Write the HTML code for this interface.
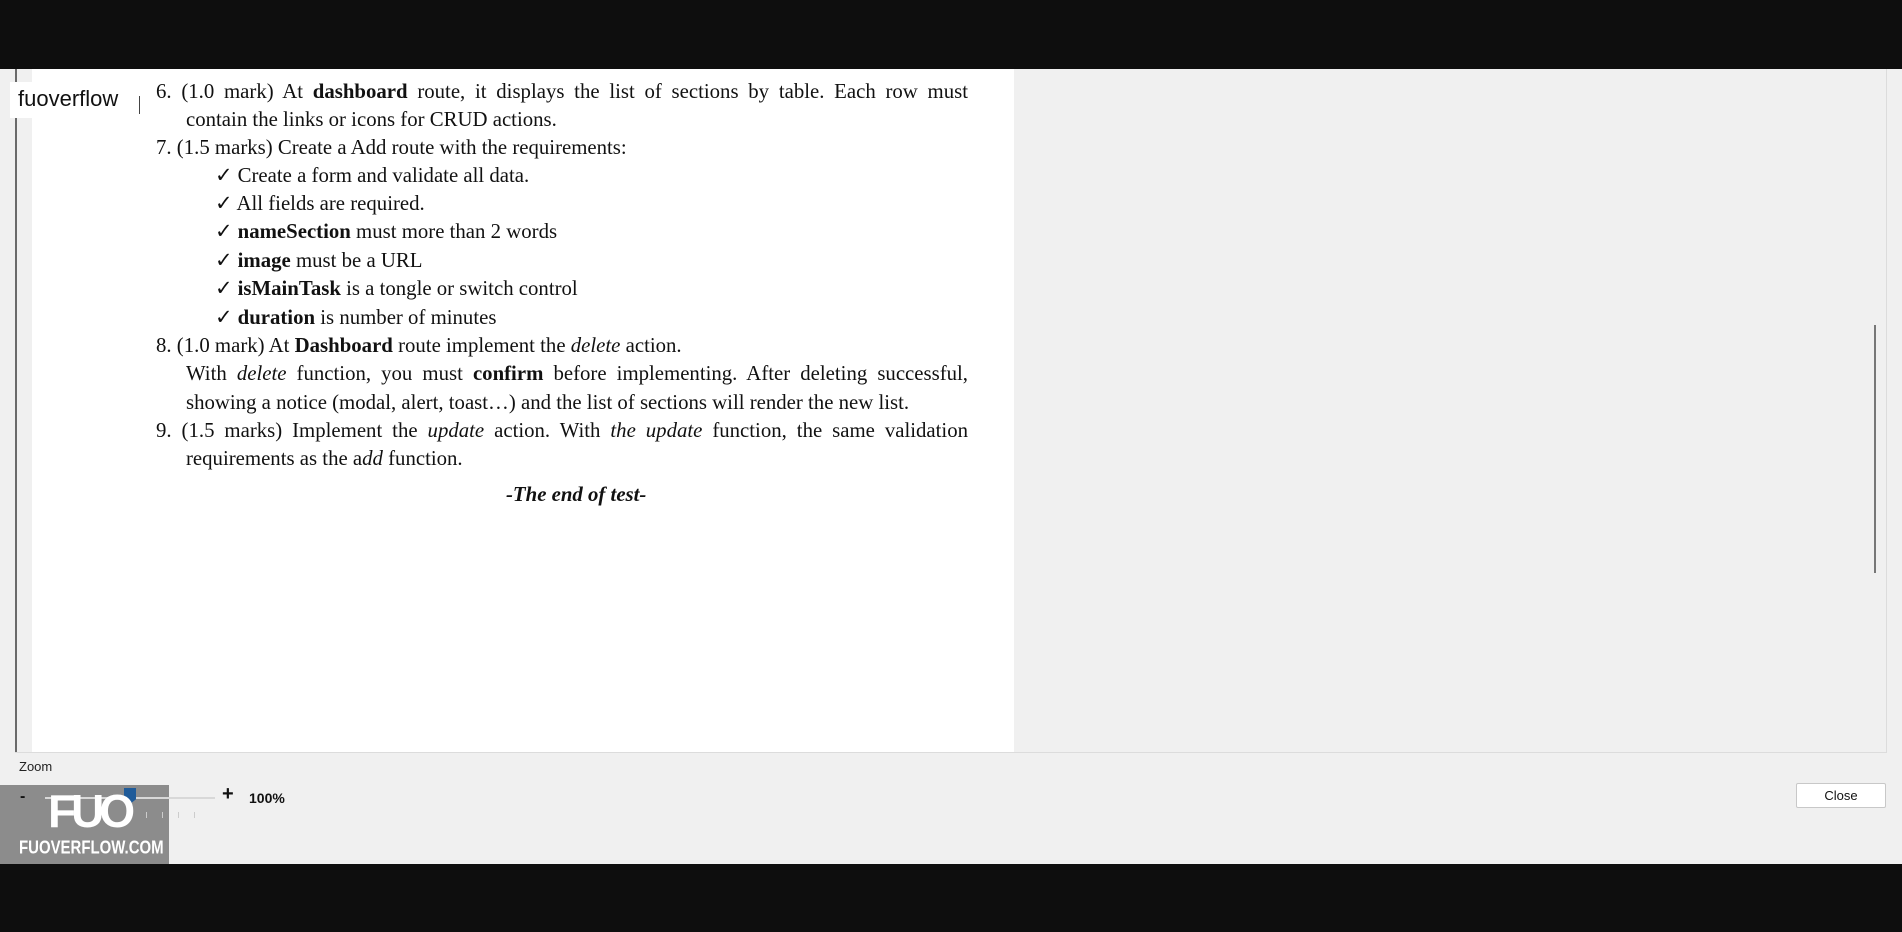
<!DOCTYPE html>
<html><head><meta charset="utf-8"><style>
*{margin:0;padding:0;box-sizing:border-box}
body{width:1902px;height:932px;background:#0e0e0e;position:relative;overflow:hidden;font-family:"Liberation Sans",sans-serif}
.win{position:absolute;left:0;top:69px;width:1902px;height:795px;background:#f0f0f0}
.leftline{position:absolute;left:15px;top:69px;width:2px;height:683px;background:#6a6a6a}
.doc{position:absolute;left:32px;top:69px;width:982px;height:683px;background:#fff}
.panelborder{position:absolute;left:15px;top:752px;width:1872px;height:1px;background:#dcdcdc}
.rborder{position:absolute;left:1886px;top:69px;width:1px;height:683px;background:#dcdcdc}
.scroll{position:absolute;left:1874px;top:325px;width:2px;height:248px;background:#777}
.t{position:absolute;font-family:"Liberation Serif",serif;font-size:20.8px;color:#111;white-space:nowrap;line-height:24px}
.j{text-align:justify;text-align-last:justify;white-space:normal}
.label{position:absolute;left:10px;top:82px;width:118px;height:36px;background:#fff;font-size:22px;color:#111;padding:4px 0 0 8px}
.cursor{position:absolute;left:139px;top:96px;width:1px;height:18px;background:#444}
</style></head><body>
<div class="win"></div>
<div class="doc"></div>
<div class="leftline"></div>
<div class="panelborder"></div>
<div class="rborder"></div>
<div class="scroll"></div>
<div class="label">fuoverflow</div>
<div class="cursor"></div>

<div class="t j" style="left:156px;top:80px;width:812px">6. (1.0 mark) At <b>dashboard</b> route, it displays the list of sections by table. Each row must</div>
<div class="t" style="left:186px;top:108px">contain the links or icons for CRUD actions.</div>
<div class="t" style="left:156px;top:136px">7. (1.5 marks) Create a Add route with the requirements:</div>
<div class="t" style="left:215px;top:164px">✓ Create a form and validate all data.</div>
<div class="t" style="left:215px;top:192px">✓ All fields are required.</div>
<div class="t" style="left:215px;top:220px">✓ <b>nameSection</b> must more than 2 words</div>
<div class="t" style="left:215px;top:249px">✓ <b>image</b> must be a URL</div>
<div class="t" style="left:215px;top:277px">✓ <b>isMainTask</b> is a tongle or switch control</div>
<div class="t" style="left:215px;top:306px">✓ <b>duration</b> is number of minutes</div>
<div class="t" style="left:156px;top:334px">8. (1.0 mark) At <b>Dashboard</b> route implement the <i>delete</i> action.</div>
<div class="t j" style="left:186px;top:362px;width:782px">With <i>delete</i> function, you must <b>confirm</b> before implementing. After deleting successful,</div>
<div class="t" style="left:186px;top:391px">showing a notice (modal, alert, toast…) and the list of sections will render the new list.</div>
<div class="t j" style="left:156px;top:419px;width:812px">9. (1.5 marks) Implement the <i>update</i> action. With <i>the update</i> function, the same validation</div>
<div class="t" style="left:186px;top:447px">requirements as the a<i>dd</i> function.</div>
<div class="t" style="left:506px;top:483px"><b><i>-The end of test-</i></b></div>

<div style="position:absolute;left:19px;top:759px;font-size:13px;color:#222">Zoom</div>
<div style="position:absolute;left:0;top:785px;width:169px;height:79px;background:#8c8c8c"></div>
<div style="position:absolute;left:20px;top:788px;font-size:16px;color:#111;font-weight:bold">-</div>
<div style="position:absolute;left:45px;top:797px;width:170px;height:2px;background:#d8d8d8"></div>
<div style="position:absolute;left:124px;top:788px;width:12px;height:16px;background:#1f5b99;clip-path:polygon(0 0,100% 0,100% 70%,50% 100%,0 70%)"></div>
<div style="position:absolute;left:130px;top:812px;width:80px;height:6px;background:repeating-linear-gradient(90deg,#ccc 0 1px,transparent 1px 16px)"></div>
<div style="position:absolute;left:222px;top:783px;font-size:20px;color:#111;font-weight:bold">+</div>
<div style="position:absolute;left:249px;top:790px;font-size:14px;color:#111;font-weight:bold">100%</div>
<div style="position:absolute;left:48px;top:788px;font-size:46px;color:#fff;font-weight:bold;letter-spacing:-5px;line-height:46px">FUO</div>
<div style="position:absolute;left:19px;top:838px;font-size:17px;color:#fff;font-weight:bold;transform:scale(0.88,1.1);transform-origin:left">FUOVERFLOW.COM</div>
<div style="position:absolute;left:1796px;top:783px;width:90px;height:25px;background:#fff;border:1px solid #c8c8c8;border-radius:2px;font-size:13px;color:#111;text-align:center;line-height:23px">Close</div>
</body></html>
